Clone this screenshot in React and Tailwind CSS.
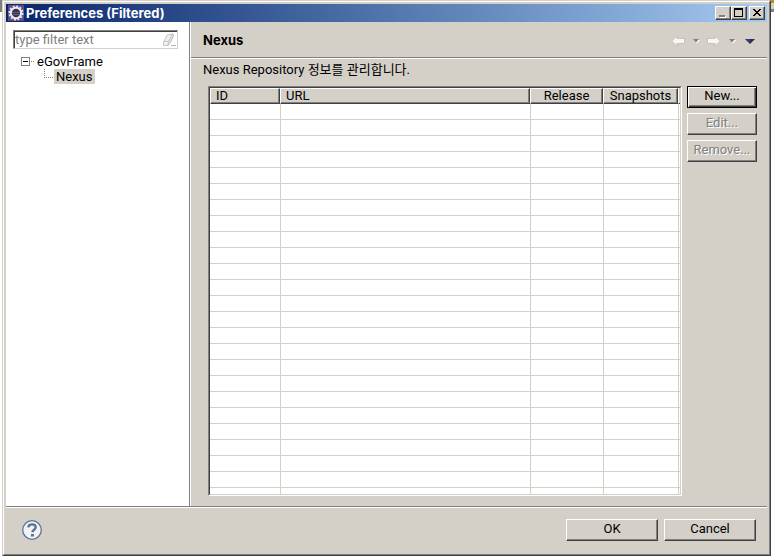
import React, { useState } from "react";

const raised =
  "bg-[#d4d0c8] border border-t-white border-l-white border-r-[#404040] border-b-[#404040] shadow-[inset_-1px_-1px_0_#808080]";

function CaptionButton({ label, children }) {
  return (
    <button type="button" aria-label={label} className={`flex h-[14px] w-4 items-center justify-center ${raised}`}>
      {children}
    </button>
  );
}

function TitleBar() {
  return (
    <header className="flex h-[18px] shrink-0 items-center bg-linear-to-r from-[#0a246a] to-[#a6caf0] pr-[2px] pl-[2px]">
      <svg width="16" height="16" viewBox="0 0 16 16" className="shrink-0" aria-hidden="true">
        <rect width="16" height="16" fill="#5c4a88" />
        <circle cx="8" cy="8" r="6.8" fill="none" stroke="#e8e6ea" strokeWidth="1.6" strokeDasharray="2 1.56" />
        <circle cx="8" cy="8" r="5.2" fill="#3a3358" stroke="#efedf0" strokeWidth="2" />
        <path d="M4 7.5h8M4.5 9.5h7" stroke="#6d6690" strokeWidth="0.8" />
      </svg>
      <h1 className="ml-[2px] font-[Inter,sans-serif] text-[13px] leading-4 font-bold whitespace-nowrap text-white">
        Preferences (Filtered)
      </h1>
      <div className="ml-auto flex">
        <CaptionButton label="Minimize">
          <svg width="14" height="12" shapeRendering="crispEdges" aria-hidden="true">
            <path d="M4 9h6v2h-6z" fill="#fff" />
            <path d="M3 8h6v2h-6z" fill="#808080" />
          </svg>
        </CaptionButton>
        <CaptionButton label="Maximize">
          <svg width="14" height="12" shapeRendering="crispEdges" aria-hidden="true">
            <path d="M2 1h9v9h-9zM3 3v6h7v-6z" fill="#000" fillRule="evenodd" />
          </svg>
        </CaptionButton>
        <div className="ml-[2px]">
          <CaptionButton label="Close">
            <svg width="14" height="12" shapeRendering="crispEdges" aria-hidden="true">
              <path
                d="M3 2h2v1h1v1h2v-1h1v-1h2v1h-1v1h-1v1h-1v1h1v1h1v1h1v1h-2v-1h-1v-1h-2v1h-1v1h-2v-1h1v-1h1v-1h1v-1h-1v-1h-1v-1h-1z"
                fill="#000"
              />
            </svg>
          </CaptionButton>
        </div>
      </div>
    </header>
  );
}

function Sidebar() {
  const [filter, setFilter] = useState("");
  return (
    <aside className="w-[185px] shrink-0 border-r border-white bg-[#808080] pr-px">
      <div className="h-full bg-white px-[7px] pt-2">
        <div className="mr-1 flex h-[19px] items-center border border-t-[#808080] border-r-[#d4d0c8] border-b-[#d4d0c8] border-l-[#808080] shadow-[inset_1px_1px_0_#404040]">
          <input
            type="text"
            aria-label="Filter"
            placeholder="type filter text"
            value={filter}
            onChange={(e) => setFilter(e.target.value)}
            className="h-[17px] min-w-0 flex-1 pl-px text-[13px] leading-4 text-black outline-none placeholder:text-[#808080]"
          />
          <button type="button" aria-label="Clear" className="mr-px">
            <svg width="14" height="14" viewBox="0 0 14 14" aria-hidden="true">
              <path d="M5 2L10.500 1L8 7.500L6 12.500H1.500L1.500 10z" fill="#f1f1ef" stroke="#c6c6c2" />
              <path d="M10.500 1L12 2L8.500 9.500L6 12.500L6.500 8.500z" fill="#dededb" stroke="#c6c6c2" />
              <path d="M1.500 8.500h5" fill="none" stroke="#c6c6c2" />
              <path d="M9 12.500h5" stroke="#b4b4b0" />
            </svg>
          </button>
        </div>
        <ul className="mt-1 text-[13px] leading-[15px]">
          <li>
            <div className="flex h-4 items-center pl-2">
              <button type="button" aria-label="Collapse eGovFrame">
                <svg width="16" height="11" shapeRendering="crispEdges" className="block" aria-hidden="true">
                  <rect x=".5" y="1.500" width="8" height="8" fill="#fff" stroke="#808080" />
                  <path d="M2 5.500h5" stroke="#000" />
                  <path d="M10 5.500h4" stroke="#808080" strokeDasharray="1 1" />
                </svg>
              </button>
              <span>eGovFrame</span>
            </div>
            <ul>
              <li className="flex h-[15px] pl-[31px]">
                <svg width="10" height="15" shapeRendering="crispEdges" aria-hidden="true">
                  <path d="M.5 0v9M0 8.500h10" fill="none" stroke="#808080" strokeDasharray="1 1" />
                </svg>
                <span className="bg-[#d4d0c8] px-[2px]">Nexus</span>
              </li>
            </ul>
          </li>
        </ul>
      </div>
    </aside>
  );
}

function Arrow({ flip }) {
  return (
    <svg width="14" height="12" viewBox="0 0 14 12" className={flip ? "-scale-x-100" : ""} aria-hidden="true">
      <path d="M.7 6L6 .8V3.500h7.500v5H6v2.700z" fill="#f7f6f2" stroke="#c2bfb7" strokeWidth=".9" strokeLinejoin="round" />
    </svg>
  );
}

function SmallTriangle() {
  return (
    <svg width="7" height="5" viewBox="0 0 7 5" className="mt-px" aria-hidden="true">
      <path d="M1 1h6L4 4.500z" fill="#fff" />
      <path d="M0 0h6L3 3.500z" fill="#808080" />
    </svg>
  );
}

function PageHeader() {
  return (
    <div className="flex h-9 shrink-0 items-center justify-between border-b border-[#808080] pr-3 pl-3 shadow-[0_1px_0_#fff]">
      <h2 className="font-[Inter,sans-serif] text-[13px] leading-4 font-bold">Nexus</h2>
      <div className="flex items-center pt-[2px]">
        <button type="button" disabled aria-label="Back"><Arrow /></button>
        <button type="button" disabled aria-label="Back history" className="ml-2"><SmallTriangle /></button>
        <button type="button" disabled aria-label="Forward" className="ml-[7px]"><Arrow flip /></button>
        <button type="button" disabled aria-label="Forward history" className="ml-2"><SmallTriangle /></button>
        <button type="button" aria-label="Menu" className="ml-[9px]">
          <svg width="10" height="5" viewBox="0 0 10 5" className="mt-px" aria-hidden="true">
            <path d="M0 0h10L5 5z" fill="#2c2c4c" />
            <path d="M1 0h4v4z" fill="#3a3a9c" />
          </svg>
        </button>
      </div>
    </div>
  );
}

const rows = Array.from({ length: 25 }, (_, i) => i);
const th =
  "h-4 border-t border-l border-t-white border-l-white border-r border-r-[#404040] border-b border-b-[#404040] bg-[#d4d0c8] p-0 font-normal leading-[14px] shadow-[inset_-1px_-1px_0_#808080]";
const td = "h-4 border-b border-l border-[#d4d0c8] p-0";

function RepositoryTable() {
  return (
    <div className="flex min-w-0 flex-1 border border-t-[#808080] border-r-white border-b-white border-l-[#808080]">
      <div className="min-w-0 flex-1 overflow-hidden border border-t-[#404040] border-r-[#d4d0c8] border-b-[#d4d0c8] border-l-[#404040] bg-white">
        <table className="w-full table-fixed border-separate border-spacing-0 text-[13px]">
          <colgroup>
            <col className="w-[70px]" />
            <col />
            <col className="w-[73px]" />
            <col className="w-[75px]" />
            <col className="w-[2px]" />
          </colgroup>
          <thead>
            <tr>
              <th scope="col" className={`${th} pl-[5px] text-left`}>ID</th>
              <th scope="col" className={`${th} pl-[5px] text-left`}>URL</th>
              <th scope="col" className={`${th} text-center`}>Release</th>
              <th scope="col" className={`${th} text-center`}>Snapshots</th>
              <td className="border-b border-l border-b-[#404040] border-l-white bg-[#d4d0c8] p-0" />
            </tr>
          </thead>
          <tbody>
            {rows.map((row) => (
              <tr key={row}>
                <td className="h-4 border-b border-[#d4d0c8] p-0" />
                <td className={td} />
                <td className={td} />
                <td className={td} />
                <td className={td} />
              </tr>
            ))}
          </tbody>
        </table>
      </div>
    </div>
  );
}

const pushButton = `h-[22px] pb-[2px] text-[13px] leading-4 ${raised}`;
const disabledText = "disabled:text-[#808080] text-shadow-[1px_1px_0_#fff]";

function Footer() {
  return (
    <footer className="flex shrink-0 items-center border-t border-[#808080] pt-3 pr-[11px] pb-[11px] pl-4 shadow-[inset_0_1px_0_#fff]">
      <button type="button" aria-label="Help">
        <svg width="20" height="20" viewBox="0 0 20 20" className="block" aria-hidden="true">
          <circle cx="10" cy="10" r="9.300" fill="#f1f2f4" stroke="#5b7397" strokeWidth="1.300" />
          <path
            d="M6.300 7.400C6.500 5.300 8 4.400 10 4.400c2.200 0 3.700 1.100 3.700 2.900 0 2.500-3.300 2.500-3.300 5"
            fill="none"
            stroke="#5b7397"
            strokeWidth="2.400"
          />
          <rect x="9" y="14" width="3" height="2.500" fill="#5b7397" />
        </svg>
      </button>
      <div className="ml-auto flex gap-[6px]">
        <button type="button" className={`w-[92px] ${pushButton}`}>OK</button>
        <button type="button" className={`w-[92px] ${pushButton}`}>Cancel</button>
      </div>
    </footer>
  );
}

export default function App() {
  return (
    <div className="flex h-screen bg-white pb-px font-[Roboto,'Noto_Sans_CJK_KR',sans-serif] text-black">
      <div className="w-[2px] shrink-0">
        <div className="h-3 bg-[#808080]" />
      </div>
      <div className="flex min-w-0 flex-1 flex-col border border-t-[#d4d0c8] border-r-[#404040] border-b-[#404040] border-l-[#d4d0c8] bg-[#d4d0c8]">
        <div className="flex min-h-0 flex-1 flex-col border border-t-white border-r-[#808080] border-b-[#808080] border-l-white p-[2px]">
          <TitleBar />
          <div className="flex min-h-0 flex-1">
            <Sidebar />
            <main className="flex min-w-0 flex-1 flex-col">
              <PageHeader />
              <div className="flex min-h-0 flex-1 flex-col pt-1 pr-[10px] pb-[10px]">
                <p className="pl-3 text-[13px] leading-[16px]">Nexus Repository 정보를 관리합니다.</p>
                <div className="mt-2 flex min-h-0 flex-1 gap-[5px] pl-[17px]">
                  <RepositoryTable />
                  <div className="flex w-[70px] shrink-0 flex-col gap-[5px]">
                    <button
                      type="button"
                      className="h-[22px] border border-black bg-[#d4d0c8] pb-[2px] text-[13px] leading-4 shadow-[inset_1px_1px_0_#fff,inset_-1px_-1px_0_#404040,inset_-2px_-2px_0_#808080]"
                    >
                      New...
                    </button>
                    <button type="button" disabled className={`${pushButton} ${disabledText}`}>Edit...</button>
                    <button type="button" disabled className={`${pushButton} ${disabledText}`}>Remove...</button>
                  </div>
                </div>
              </div>
            </main>
          </div>
          <Footer />
        </div>
      </div>
      <div className="w-[3px] shrink-0">
        <div className="h-[3px] bg-[#c8862a]" />
        <div className="h-[6px] bg-[#d4d0c8]" />
        <div className="h-[3px] bg-[#808080]" />
      </div>
    </div>
  );
}
